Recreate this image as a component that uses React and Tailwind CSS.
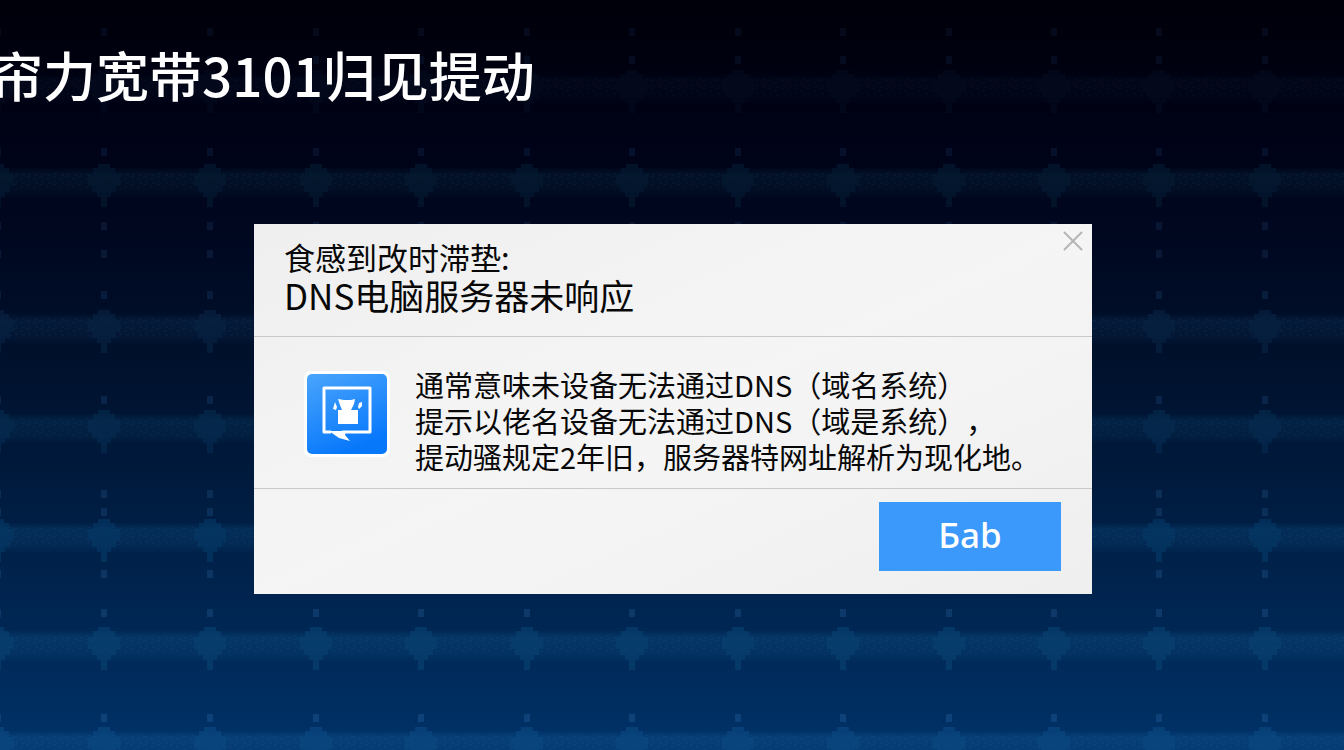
import React from 'react';
import { X } from 'lucide-react';

const COLUMNS = [-2, 104, 210, 316, 421, 527, 632, 738, 843, 949, 1054, 1159, 1265];

const ROWS = [
    { y: 88, color: '#07142a', opacity: 0.5 },
    { y: 182, color: '#06243a', opacity: 0.7 },
    { y: 328, color: '#0a2a4c', opacity: 0.75 },
    { y: 428, color: '#07345a', opacity: 0.7 },
    { y: 537, color: '#084070', opacity: 0.75 },
    { y: 645, color: '#0a4676', opacity: 0.8 },
    { y: 745, color: '#0c4b84', opacity: 0.9 },
];

const DOTS = [32, 60, 152, 226, 254, 295, 400, 494, 512, 574, 613, 718];

function Backdrop() {
    return (
        <svg
            className="absolute inset-0 w-full h-full"
            viewBox="0 0 1344 750"
            preserveAspectRatio="xMidYMid slice"
            aria-hidden="true"
        >
            <defs>
                <linearGradient id="band" x1="0" y1="0" x2="0" y2="1">
                    <stop offset="0" stopColor="#fff" stopOpacity="0.1" />
                    <stop offset="0.2" stopColor="#fff" stopOpacity="0.6" />
                    <stop offset="0.7" stopColor="#fff" stopOpacity="0.4" />
                    <stop offset="1" stopColor="#fff" stopOpacity="0" />
                </linearGradient>
                <pattern id="grain" width="13" height="8" patternUnits="userSpaceOnUse">
                    <path d="M0 0h4v2H0zM7 2h3v2H7zM2 5h3v2H2zM9 6h3v2H9z" fill="#5aa0d8" />
                </pattern>
                <mask id="bandMask" maskContentUnits="objectBoundingBox">
                    <rect width="1" height="1" fill="url(#band)" />
                </mask>
            </defs>
            {ROWS.map((row) => (
                <g key={row.y} fill={row.color} opacity={row.opacity}>
                    <rect x="0" y={row.y - 14} width="1344" height="32" mask="url(#bandMask)" />
                    <rect x="0" y={row.y - 10} width="1344" height="18" fill="url(#grain)" opacity="0.05" />
                    {COLUMNS.map((x) => (
                        <path
                            key={x}
                            d={`M${x - 6} ${row.y - 18}h12v4h5v6h5v12h-4v6h-5v5h-4v10h-6v-10h-4v-5h-5v-6h-4v-12h5v-6h5z`}
                            opacity="0.65"
                        />
                    ))}
                </g>
            ))}
            {DOTS.map((y) =>
                COLUMNS.map((x) => (
                    <rect key={`${x}-${y}`} x={x - 3} y={y - 4} width="6" height="8" fill="#3d83c4" opacity={0.08 + y / 5000} />
                ))
            )}
        </svg>
    );
}

function MessageIcon() {
    return (
        <svg className="mt-[5px] w-[86px] h-[86px] shrink-0" viewBox="0 0 86 86" aria-hidden="true">
            <defs>
                <linearGradient id="tile" x1="0" y1="0" x2="0.4" y2="1">
                    <stop offset="0" stopColor="#4aa5fc" />
                    <stop offset="1" stopColor="#0878fb" />
                </linearGradient>
            </defs>
            <rect width="86" height="86" rx="7" fill="#fff" />
            <rect x="3" y="3" width="80" height="80" rx="5" fill="url(#tile)" />
            <path d="M27 61H20V17h46v44H38" fill="none" stroke="#fff" strokeWidth="3" strokeLinejoin="round" />
            <path d="M25 60h17l-1 4 5 6-11-3z" fill="#fff" />
            <path d="M34 39h20v14H34zM34 28l6 1h7l4-1-1 5-3 6H38l-2-5z" fill="#fff" />
            <path d="M31 31l2 5-1 3-3-1zM55 32l3-1v4l-3 3-1-2z" fill="#fff" />
        </svg>
    );
}

export default function App() {
    return (
        <main className="relative min-h-screen overflow-hidden bg-linear-to-b from-[#00000a] via-[#00122e] to-[#003268] font-['Noto_Sans_CJK_SC',sans-serif]">
            <Backdrop />
            <div className="relative pl-0.5">
                <h1 className="-ml-3 pt-[34px] text-[53px] leading-[80px] font-medium text-white whitespace-nowrap">
                    帘力宽带3101归见提动
                </h1>

                <section
                    role="dialog"
                    aria-labelledby="dialog-title"
                    className="relative mx-auto mt-[110px] max-w-[838px] bg-linear-to-br from-[#efefef] via-[#f5f5f6] to-[#efeff0] text-[#080808]"
                >
                    <button type="button" aria-label="关闭" className="absolute top-0 right-0.5 text-[#b5b5b5]">
                        <X size={34} strokeWidth={2} absoluteStrokeWidth />
                    </button>

                    <header className="border-b border-[#c9c9c9] px-[30px] pt-3.5 pb-[22px]">
                        <p className="text-[31px] leading-[38px]">食感到改时滞垫:</p>
                        <h2 id="dialog-title" className="text-[35px] leading-[38px]">DNS电脑服务器未响应</h2>
                    </header>

                    <div className="flex gap-[25px] border-b border-[#c9c9c9] pt-[29px] pb-3.5 pl-[50px]">
                        <MessageIcon />
                        <p className="text-[29px] leading-9 whitespace-nowrap [text-spacing-trim:space-all]">
                            通常意味未设备无法通过DNS（域名系统）<br />
                            提示以佬名设备无法通过DNS（域是系统），<br />
                            提动骚规定2年旧，服务器特网址解析为现化地。
                        </p>
                    </div>

                    <footer className="flex justify-end pt-[13px] pr-[31px] pb-[23px]">
                        <button
                            type="button"
                            className="h-[69px] w-[182px] bg-[#3b99fc] pb-1 font-['Noto_Sans',sans-serif] text-[35px] leading-none font-medium text-white"
                        >
                            Бab
                        </button>
                    </footer>
                </section>
            </div>
        </main>
    );
}
